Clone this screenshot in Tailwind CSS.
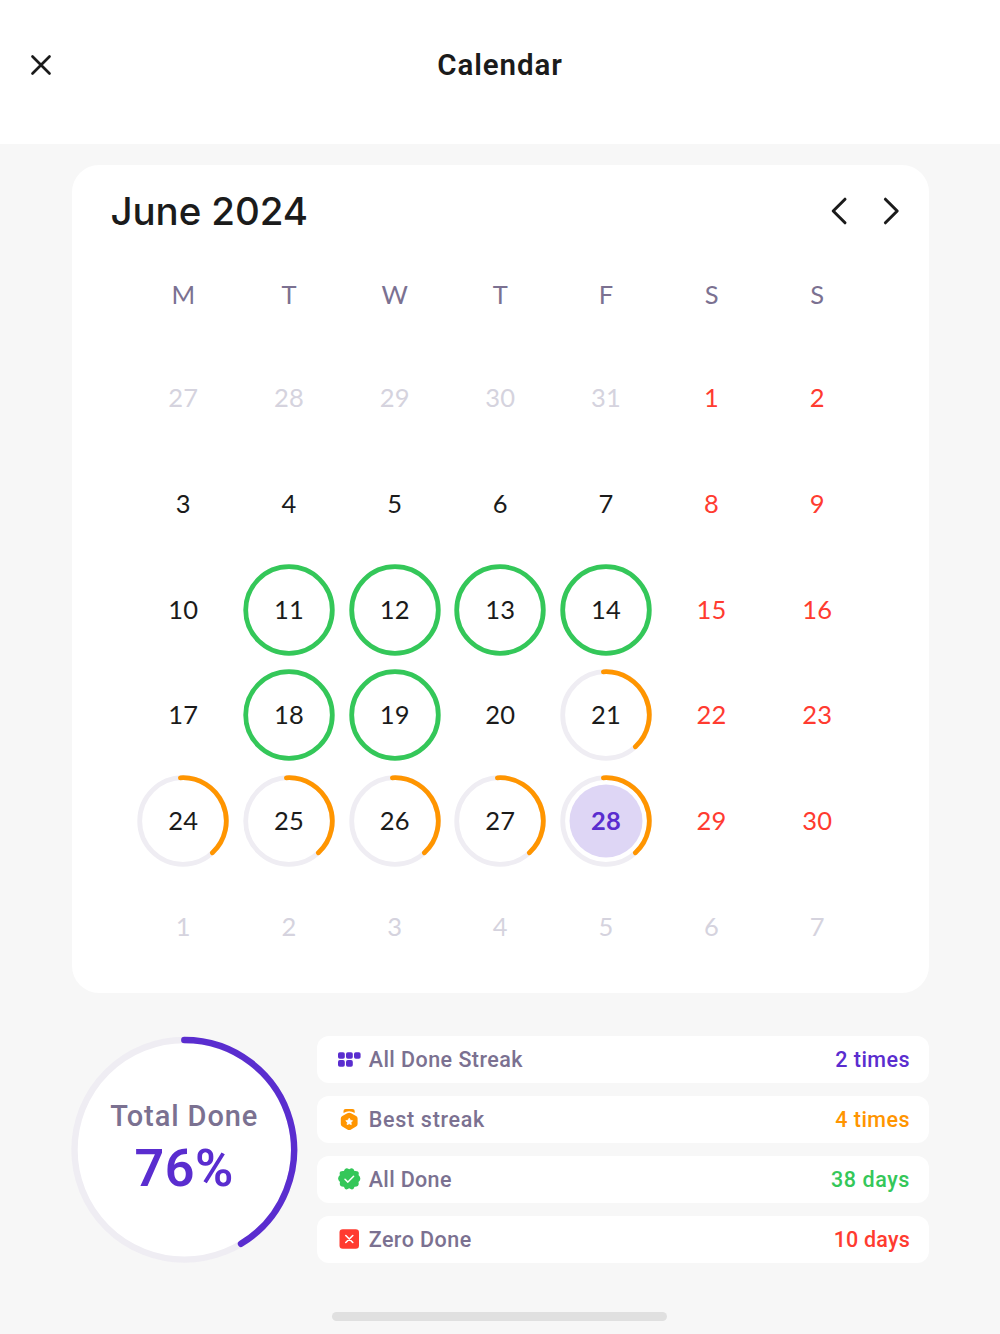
<!DOCTYPE html>
<html lang="en">
<head>
<meta charset="utf-8">
<title>Calendar</title>
<script src="https://cdn.jsdelivr.net/npm/@tailwindcss/browser@4"></script>
</head>
<body class="flex h-[1334px] w-[1000px] flex-col overflow-hidden bg-[#f7f7f7] font-['Roboto',sans-serif] font-medium text-[#1b1b1b]">
<header class="grid h-36 shrink-0 grid-cols-[82px_1fr_82px] bg-white pt-9">
  <button class="flex h-[58px] items-center justify-center" aria-label="Close">
    <svg class="size-6" viewBox="0 0 24 24" fill="none" stroke="currentColor" stroke-width="2.7" stroke-linecap="round"><path d="M3.5 3.5L20.5 20.5M20.5 3.5L3.5 20.5"/></svg>
  </button>
  <h1 class="h-[58px] text-center text-[29.5px] leading-[58px] font-semibold tracking-[0.9px]">Calendar</h1>
</header>
<main class="flex flex-col pt-[21px] pr-[71px] pl-[71.5px]">
  <section class="h-[827.5px] rounded-[27px] bg-white">
    <div class="flex h-[92px] items-center justify-between pr-[28px] pl-[39px]">
      <h2 class="font-['Inter',sans-serif] text-[38.5px] leading-[46px] font-[450] tracking-[-0.1px]">June 2024</h2>
      <div class="flex gap-[17px]">
        <svg class="h-7 w-7" viewBox="0 0 28 28" fill="none" stroke="currentColor" stroke-width="3" stroke-linecap="round" stroke-linejoin="round"><path d="M17 2.2L5.2 14L17 25.8"/></svg>
        <svg class="h-7 w-7" viewBox="0 0 28 28" fill="none" stroke="currentColor" stroke-width="3" stroke-linecap="round" stroke-linejoin="round"><path d="M12.4 2.2L24.2 14L12.4 25.8"/></svg>
      </div>
    </div>
    <div id="weekdays" class="grid h-[88.3px] grid-cols-[repeat(7,105.67px)] pt-[22px] pl-[59px] font-['Lato',sans-serif] text-[25.5px] leading-[30px] font-normal text-[#7b7191]"></div>
    <div id="days" class="grid auto-rows-[105.7px] grid-cols-[repeat(7,105.67px)] pl-[59px] font-['Lato',sans-serif] text-[25.5px] leading-[30px] font-normal tracking-[0.2px]"></div>
  </section>
  <section class="mt-[43px] -ml-[0.8px] flex items-start gap-[19px]">
    <div class="grid size-[227px] shrink-0 place-items-center">
      <svg class="col-start-1 row-start-1 size-[227px]" viewBox="0 0 227 227" fill="none" stroke-width="6.4">
        <circle cx="113.3" cy="113.8" r="109.8" fill="#fff" stroke="#efedf3"/>
        <path d="M113.3 4A109.8 109.8 0 0 1 170 207.8" stroke="#5a2dcf" stroke-linecap="round"/>
      </svg>
      <div class="z-10 col-start-1 row-start-1 pt-[3px] text-center">
        <div class="text-[29px] leading-[37px] tracking-[0.9px] text-[#7b7191]">Total Done</div>
        <div class="text-[52px] leading-[68px] font-semibold tracking-[0.5px] text-[#5a2dcf]">76%</div>
      </div>
    </div>
    <div class="flex flex-1 flex-col gap-[13.2px] pt-[0.8px] text-[21.5px] tracking-[0.45px]">
      <div class="flex h-[46.7px] items-center rounded-xl bg-white pt-px pr-[19px] pl-5">
        <svg class="mr-2 mb-px size-6" viewBox="0 0 24 24" fill="#5a2dcf"><rect x="1" y="4.2" width="6.8" height="6.6" rx="1.8"/><rect x="9" y="4.2" width="6.8" height="6.6" rx="1.8"/><rect x="17" y="4.2" width="6.6" height="6.6" rx="1.8"/><rect x="1" y="12.1" width="6.8" height="6.6" rx="1.8"/><rect x="9" y="12.1" width="6.8" height="6.6" rx="1.8"/></svg>
        <span class="text-[#7b7191]">All Done Streak</span><span class="ml-auto text-[#5a2dcf]">2 times</span>
      </div>
      <div class="flex h-[46.7px] items-center rounded-xl bg-white pt-px pr-[19px] pl-5">
        <svg class="mr-2 mb-px size-6" viewBox="0 0 24 24"><path d="M8.6 1h6.8q2.4 0 2.3 2.1V5Q12.1 1.6 6.5 5V3.1Q6.5 1 8.6 1Z" fill="#ff9500"/><path d="M12.2 4.7q1 0 1.9.5l5 2.7q1.5.9 1.5 2.600v5.400q0 1.700-1.500 2.600l-5 2.900q-1.900 1-3.800 0l-5-2.900q-1.500-.9-1.500-2.600v-5.400q0-1.700 1.500-2.600l5-2.700q.9-.5 1.900-.5Z" fill="#ff9500"/><path d="M12.200 10.200l1.150 2 2.250.5-1.550 1.700.25 2.300-2.100-.95-2.100.95.250-2.300-1.550-1.700 2.250-.5Z" fill="#fff" stroke="#fff" stroke-width=".7" stroke-linejoin="round"/></svg>
        <span class="tracking-[0.7px] text-[#7b7191]">Best streak</span><span class="ml-auto text-[#ff9500]">4 times</span>
      </div>
      <div class="flex h-[46.7px] items-center rounded-xl bg-white pt-px pr-[19px] pl-5">
        <svg class="mr-2 mb-px size-6" viewBox="0 0 24 24"><path d="M12.200 2.300Q16.200 -.6 17.500 4.100Q22.900 3.600 21.500 8.100Q25.200 11.700 21.500 15Q22.700 19.900 17.600 19.700Q16.200 24.100 12.200 21.300Q8.200 24.100 6.900 19.700Q1.800 19.900 3 15Q-.8 11.700 2.900 8.100Q1.500 3.600 6.900 4.100Q8.200 -.6 12.200 2.300Z" fill="#34c759"/><path d="M8 12.300l2.900 2.800 5.700-5.900" fill="none" stroke="#fff" stroke-width="1.500" stroke-linecap="round" stroke-linejoin="round"/></svg>
        <span class="tracking-[0.35px] text-[#7b7191]">All Done</span><span class="ml-auto tracking-[0.6px] text-[#34c759]">38 days</span>
      </div>
      <div class="flex h-[46.7px] items-center rounded-xl bg-white pt-px pr-[19px] pl-5">
        <svg class="mr-2 mb-px size-6" viewBox="0 0 24 24"><rect x="2.500" y="2.200" width="19.500" height="19.600" rx="3.300" fill="#ff3b30"/><path d="M8.800 8.500l7 7M15.800 8.500l-7 7" stroke="#fff" stroke-width="1.600" stroke-linecap="round"/></svg>
        <span class="text-[#7b7191]">Zero Done</span><span class="ml-auto tracking-[0.2px] text-[#ff3b30]">10 days</span>
      </div>
    </div>
  </section>
</main>
<div class="mt-[49.6px] ml-[332px] h-[8.500px] w-[334.500px] shrink-0 rounded-full bg-[#e0e0e0]"></div>
<script>
  const addCell = (parent, text, color) => {
    const el = document.createElement('div');
    el.className = 'grid place-items-center ' + color;
    el.innerHTML = `<span class="z-10 col-start-1 row-start-1 pb-[2px]">${text}</span>`;
    parent.appendChild(el);
    return el;
  };
  const weekdays = document.getElementById('weekdays');
  const days = document.getElementById('days');
  const ring = (inner) => `<svg class="col-start-1 row-start-1 size-[92px]" viewBox="-46 -46 92 92" fill="none" stroke-width="4.8">${inner}</svg>`;
  [...'MTWTFSS'].forEach(d => addCell(weekdays, d, 'h-[32px]'));
  const full = [11, 12, 13, 14, 18, 19];
  const part = [21, 24, 25, 26, 27, 28];
  for (let i = 0; i < 42; i++) {
    const n = i - 4;
    const other = n < 1 || n > 30;
    const label = n < 1 ? n + 31 : n > 30 ? n - 30 : n;
    const color = other ? 'text-[#d5d3de]' : i % 7 > 4 ? 'text-[#ff3b30]' : n === 28 ? 'font-bold text-[#5a2dcf]' : 'text-[#1b1b1b]';
    const el = addCell(days, label, color);
    if (full.includes(n)) el.insertAdjacentHTML('afterbegin', ring('<circle r="43.300" stroke="#34c759"/>'));
    if (part.includes(n)) el.insertAdjacentHTML('afterbegin', ring('<circle r="43.300" stroke="#efedf3"/>' + (n === 28 ? '<circle r="36.500" fill="#ded6f5"/>' : '') + '<path d="M-2.600 -43.200A43.300 43.300 0 0 1 29.400 31.800" stroke="#ff9500" stroke-linecap="round"/>'));
  }
</script>
</body>
</html>
